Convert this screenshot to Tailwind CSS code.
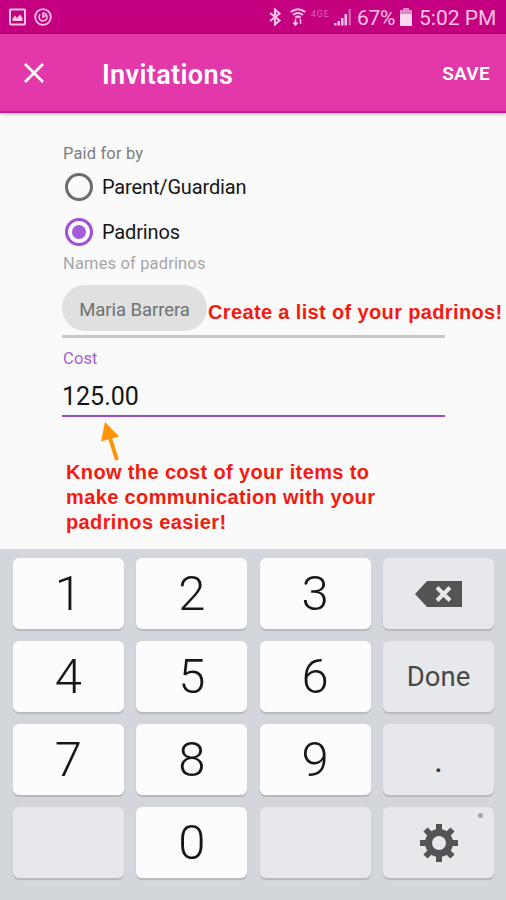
<!DOCTYPE html>
<html lang="en">
<head>
<meta charset="utf-8">
<title>Invitations</title>
<script src="https://cdn.jsdelivr.net/npm/@tailwindcss/browser@4"></script>
</head>
<body class="w-[506px] h-[900px] overflow-hidden bg-[#fafafa] font-[Roboto,sans-serif] flex flex-col whitespace-nowrap">
<div class="h-[34px] shrink-0 bg-[#c50080] text-[#f7c3e3] flex items-center pl-[9px] pr-[10px] border-b border-[#aa0070]">
  <svg class="w-[17px] h-[18px]" viewBox="0 0 17 18" fill="none" stroke="currentColor" stroke-width="2"><rect x="1" y="1.5" width="15" height="15" rx="1"/><path d="M3.500 13V10.500L6 7.500L8 10L11 6.500L13.500 10V13Z" fill="currentColor" stroke="none"/></svg>
  <svg class="w-[18px] h-[18px] ml-2" viewBox="0 0 18 18" fill="none" stroke="currentColor" stroke-width="1.800"><circle cx="9" cy="9" r="7.800"/><path d="M6.200 6.200A4 4 0 1 0 9 5V9L11.500 7.500" stroke-width="1.500"/></svg>
  <div class="ml-auto flex items-center">
    <svg class="w-3 h-[18px]" viewBox="0 0 12 18" fill="none" stroke="currentColor" stroke-width="2.100"><path d="M1 5L10.500 12.500L6 16.500V1.500L10.500 5.500L1 13"/></svg>
    <svg class="w-[16px] h-[18px] ml-[9px]" viewBox="0 0 16 18" fill="none" stroke="currentColor" stroke-width="2"><path d="M.7 4Q8-1.500 15.300 4M3 7Q8 3 13 7M5.300 9.700Q8 7.500 10.700 9.700"/><path d="M5.500 17V11M3.300 14.500L5.500 17L7.700 14.500M10.500 11V16" stroke-width="1.600"/></svg>
    <span class="ml-[5px] -mt-[6px] w-[21px] h-[10px] text-[9px] leading-[11px] tracking-[.8px] text-[#dd5fb2]">4GE</span>
    <svg class="w-[18px] h-[17px] ml-[2px] mt-px" viewBox="0 0 18 17" fill="currentColor"><path d="M0 14h2.500v2.500H0zM3.500 12H6v4.500H3.500zM7 9h2.500v7.500H7zM10.500 5H13v11.500h-2.500z"/><path d="M14.500 0H17v16.500h-2.500z" opacity=".45"/></svg>
    <span class="ml-[5px] w-[41px] text-[21px] tracking-[-.3px] leading-6 mt-[2px]">67%</span>
    <svg class="w-3 h-[18px] ml-[2px] mt-px" viewBox="0 0 12 18"><path d="M3 0h6v2h3v4H0V2h3z" fill="#e18bc3"/><path d="M0 6h12v12H0z" fill="#fbd8ed"/></svg>
    <span class="ml-[7px] w-[77px] text-[21px] leading-6 mt-[2px]">5:02 PM</span>
  </div>
</div>
<header class="h-[79px] shrink-0 bg-[#e338a9] border-b-2 border-[#cf1593] shadow-[0_1px_4px_rgba(0,0,0,.3)] text-white flex items-center pl-6 pr-4">
  <svg class="w-5 h-5" viewBox="0 0 20 20" stroke="currentColor" stroke-width="2.700"><path d="M1 1L19 19M19 1L1 19"/></svg>
  <h1 class="ml-[58px] mt-1 text-[27px] font-semibold leading-8 tracking-[.35px]">Invitations</h1>
  <span class="ml-auto mt-[3px] text-[19px] font-semibold leading-6 tracking-[.3px]">SAVE</span>
</header>
<main class="h-[436px] shrink-0 pl-[62px] flex flex-col items-start">
  <div class="mt-[31px] ml-px h-5 text-[16.500px] leading-5 tracking-[.15px] text-[#7d7d7d]">Paid for by</div>
  <div class="mt-[8px] h-[30px] flex items-center text-[20px] tracking-[-.15px] text-[#161616]">
    <span class="ml-[3px] w-7 h-7 rounded-full border-[3px] border-[#6c6c6c]"></span><span class="ml-[9px] -mt-px">Parent/Guardian</span>
  </div>
  <div class="mt-[15px] h-[30px] flex items-center text-[20px] tracking-[-.15px] text-[#161616]">
    <span class="ml-[3px] w-7 h-7 rounded-full border-[3px] border-[#a14fd3] flex items-center justify-center"><i class="w-[14px] h-[14px] rounded-full bg-[#a35bd6]"></i></span><span class="ml-[9px] -mt-px">Padrinos</span>
  </div>
  <div class="mt-[7px] ml-px h-5 text-[16.500px] leading-5 tracking-[.15px] text-[#a6a6a6]">Names of padrinos</div>
  <div class="mt-[11px] w-[383px] h-[53px] border-b-[3px] border-[#c7c7c7] flex items-start">
    <span class="w-[145px] h-[46px] shrink-0 rounded-full bg-[#e0e0e0] text-[#717171] text-[18.500px] leading-[50px] tracking-[-.05px] text-center">Maria Barrera</span>
    <span class="ml-[1px] mt-[15px] font-['Liberation_Sans',sans-serif] font-bold text-[20px] leading-6 tracking-[.36px] text-[#f5190f]">Create a list of your padrinos!</span>
  </div>
  <div class="mt-[10px] ml-px h-5 text-[16.500px] leading-[22px] tracking-[.15px] text-[#a45fd2]">Cost</div>
  <div class="mt-[7px] w-[383px] h-[42px] border-b-2 border-[#9a4cc2] pt-[7px] text-[25px] leading-[30px] text-[#161616]">125.00</div>
  <svg class="ml-[38px] mt-[5px] w-5 h-[39px]" viewBox="0 0 20 39"><path d="M5 0L19 14.500L1 19.500Z" fill="#ff9408"/><path d="M10 16L17 38" stroke="#ff9408" stroke-width="4"/></svg>
  <p class="ml-[4px] -mt-[1px] font-['Liberation_Sans',sans-serif] font-bold text-[20px] leading-[25px] tracking-[.37px] text-[#f5190f]">Know the cost of your items to<br>make communication with your<br>padrinos easier!</p>
</main>
<section class="h-[351px] shrink-0 bg-[#d3d6db] pt-[9px] pl-[13px] pr-3 grid grid-cols-4 auto-rows-[71px] gap-x-[12.500px] gap-y-3 content-start text-center text-[49px] font-light leading-[72px] text-[#161616] *:rounded-md *:shadow-[0_2px_1px_#b6b9be]">
  <div class="bg-[#fcfcfc]">1</div><div class="bg-[#fcfcfc]">2</div><div class="bg-[#fcfcfc]">3</div>
  <div class="bg-[#e7e8ec] flex items-center justify-center"><svg class="w-12 h-[26px]" viewBox="0 0 48 26"><path d="M0 13L12 0H47V26H12Z" fill="#545454"/><path d="M22 6.500L35 19.500M35 6.500L22 19.500" stroke="#e7e8ec" stroke-width="4"/></svg></div>
  <div class="bg-[#fcfcfc]">4</div><div class="bg-[#fcfcfc]">5</div><div class="bg-[#fcfcfc]">6</div>
  <div class="bg-[#e7e8ec] text-[27.500px] font-normal text-[#484848]">Done</div>
  <div class="bg-[#fcfcfc]">7</div><div class="bg-[#fcfcfc]">8</div><div class="bg-[#fcfcfc]">9</div>
  <div class="bg-[#e7e8ec] text-[34px] font-normal text-[#383838]">.</div>
  <div class="bg-[#e7e8ec]"></div><div class="bg-[#fcfcfc]">0</div><div class="bg-[#e7e8ec]"></div>
  <div class="bg-[#e7e8ec] relative flex items-center justify-center"><svg class="w-[38px] h-[38px]" viewBox="-19 -19 38 38" fill="none" stroke="#545454"><circle r="10.500" stroke-width="7"/><path d="M0-19V-12M0 19V12M-19 0H-12M19 0H12M-13.500-13.500L-9-9M13.500 13.500L9 9M-13.500 13.500L-9 9M13.500-13.500L9-9" stroke-width="6"/></svg><i class="absolute top-[6px] right-[11px] w-[5px] h-[5px] rounded-full bg-[#a5a5a8]"></i></div>
</section>
</body>
</html>
